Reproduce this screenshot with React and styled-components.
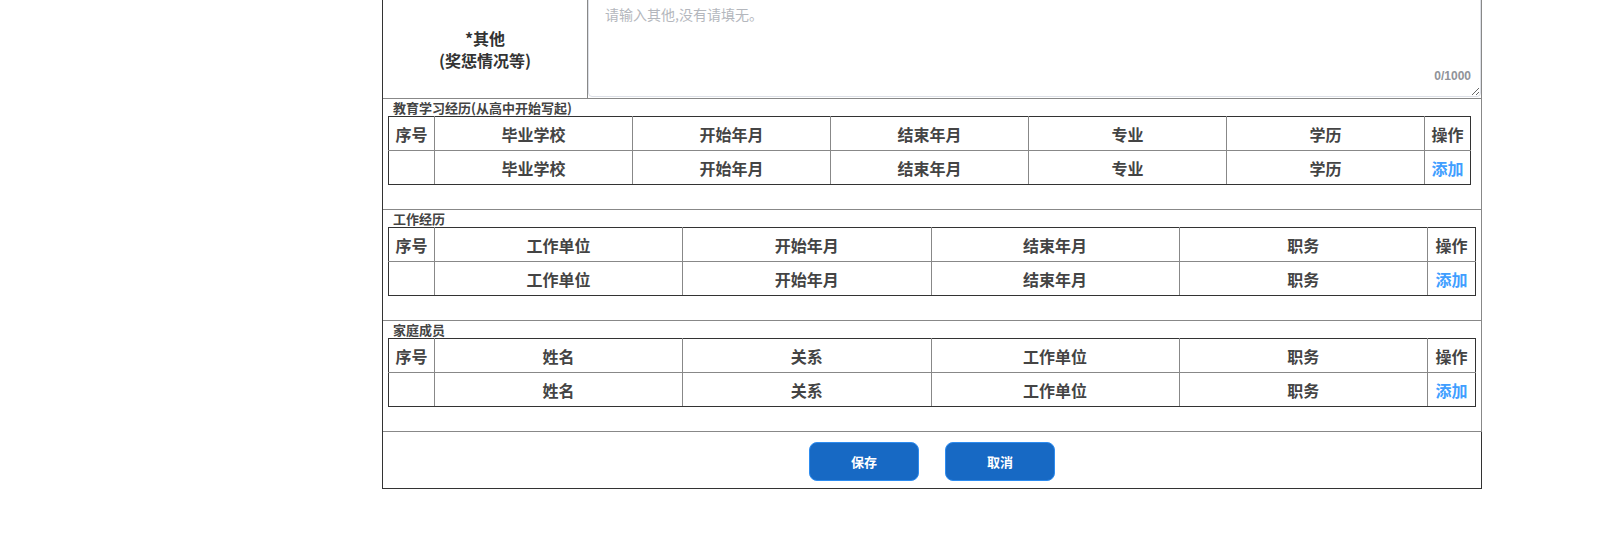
import React from 'react';
import styled, { createGlobalStyle } from 'styled-components';

const GlobalStyle = createGlobalStyle`
  html, body {
    margin: 0;
    padding: 0;
    background: #fff;
    font-family: "Microsoft YaHei", "Noto Sans CJK SC", "Noto Sans", sans-serif;
    color: #333;
  }
`;

const Page = styled.div`
  width: 1100px;
  margin: -4px 0 0 382px;
  border-left: 1px solid #333;
  box-sizing: border-box;
`;

const FieldRow = styled.div`
  display: flex;
  height: 103px;
  border-bottom: 1px solid #888;
  border-right: 1px solid #888;
  box-sizing: border-box;
`;

const Label = styled.div`
  width: 205px;
  flex-shrink: 0;
  border-right: 1px solid #888;
  box-sizing: border-box;
  display: flex;
  flex-direction: column;
  align-items: center;
  justify-content: center;
  padding-top: 4px;
  font-size: 16px;
  font-weight: 700;
  line-height: 22px;
  color: #333;
`;

const AreaWrap = styled.div`
  flex: 1;
  position: relative;
  padding-bottom: 1px;
  display: flex;
`;

const TextArea = styled.textarea`
  flex: 1;
  resize: vertical;
  border: 1px solid #dcdfe6;
  border-radius: 4px;
  padding: 7px 15px 5px 16px;
  font-family: inherit;
  font-size: 14px;
  line-height: 20px;
  color: #606266;
  outline: none;
  box-sizing: border-box;

  &::placeholder {
    color: #b4b7bd;
  }
`;

const Counter = styled.span`
  position: absolute;
  right: 10px;
  bottom: 15px;
  font-family: "Liberation Sans", Arial, sans-serif;
  font-size: 12px;
  font-weight: 700;
  color: #909399;
`;

const Section = styled.div`
  border-bottom: 1px solid #888;
  border-right: 1px solid #888;
  padding-bottom: 24px;
`;

const SectionTitle = styled.div`
  height: 17px;
  line-height: 17px;
  padding-left: 10px;
  font-size: 13px;
  font-weight: 700;
  color: #444;
`;

const Table = styled.table`
  margin-left: 5px;
  width: ${(p) => p.$width}px;
  border-collapse: collapse;
  table-layout: fixed;
  border: 1px solid #333;

  tr:first-child td {
    border-top-color: #333;
  }
  tr:last-child td {
    border-bottom-color: #333;
  }
  td:first-child {
    border-left-color: #333;
  }
  td:last-child {
    border-right-color: #333;
  }
`;

const Cell = styled.td`
  height: 33px;
  padding: 0;
  border: 1px solid #888;
  text-align: center;
  font-size: 16px;
  font-weight: 700;
  color: ${(p) => (p.$link ? '#409eff' : '#444')};
  cursor: ${(p) => (p.$link ? 'pointer' : 'default')};
`;

const Footer = styled.div`
  height: 57px;
  border-right: 1px solid #333;
  border-bottom: 1px solid #333;
  box-sizing: border-box;
  display: flex;
  align-items: center;
  justify-content: center;
  gap: 26px;
  padding-top: 2px;
`;

const Button = styled.button`
  width: 110px;
  height: 39px;
  border: 1px solid #2d8cf0;
  border-radius: 8px;
  background: #1769c4;
  color: #fff;
  font-family: inherit;
  font-size: 13px;
  font-weight: 700;
  cursor: pointer;
`;

const sections = [
  {
    title: '教育学习经历(从高中开始写起)',
    width: 1083,
    edge: 46,
    cols: ['毕业学校', '开始年月', '结束年月', '专业', '学历'],
  },
  {
    title: '工作经历',
    width: 1088,
    edge: 46,
    last: 48,
    cols: ['工作单位', '开始年月', '结束年月', '职务'],
  },
  {
    title: '家庭成员',
    width: 1088,
    edge: 46,
    last: 48,
    cols: ['姓名', '关系', '工作单位', '职务'],
  },
];

const ListSection = ({ title, width, edge, last, cols }) => (
  <Section>
    <SectionTitle>{title}</SectionTitle>
    <Table $width={width}>
      <colgroup>
        <col style={{ width: edge }} />
        {cols.map((c, i) => (
          <col key={i} />
        ))}
        <col style={{ width: last || edge }} />
      </colgroup>
      <tbody>
        <tr>
          <Cell>序号</Cell>
          {cols.map((c, i) => (
            <Cell key={i}>{c}</Cell>
          ))}
          <Cell>操作</Cell>
        </tr>
        <tr>
          <Cell />
          {cols.map((c, i) => (
            <Cell key={i}>{c}</Cell>
          ))}
          <Cell $link>添加</Cell>
        </tr>
      </tbody>
    </Table>
  </Section>
);

export default function App() {
  return (
    <>
      <GlobalStyle />
      <Page>
        <FieldRow>
          <Label>
            <span>*其他</span>
            <span>(奖惩情况等)</span>
          </Label>
          <AreaWrap>
            <TextArea placeholder="请输入其他,没有请填无。" />
            <Counter>0/1000</Counter>
          </AreaWrap>
        </FieldRow>
        {sections.map((s) => (
          <ListSection key={s.title} {...s} />
        ))}
        <Footer>
          <Button>保存</Button>
          <Button>取消</Button>
        </Footer>
      </Page>
    </>
  );
}
